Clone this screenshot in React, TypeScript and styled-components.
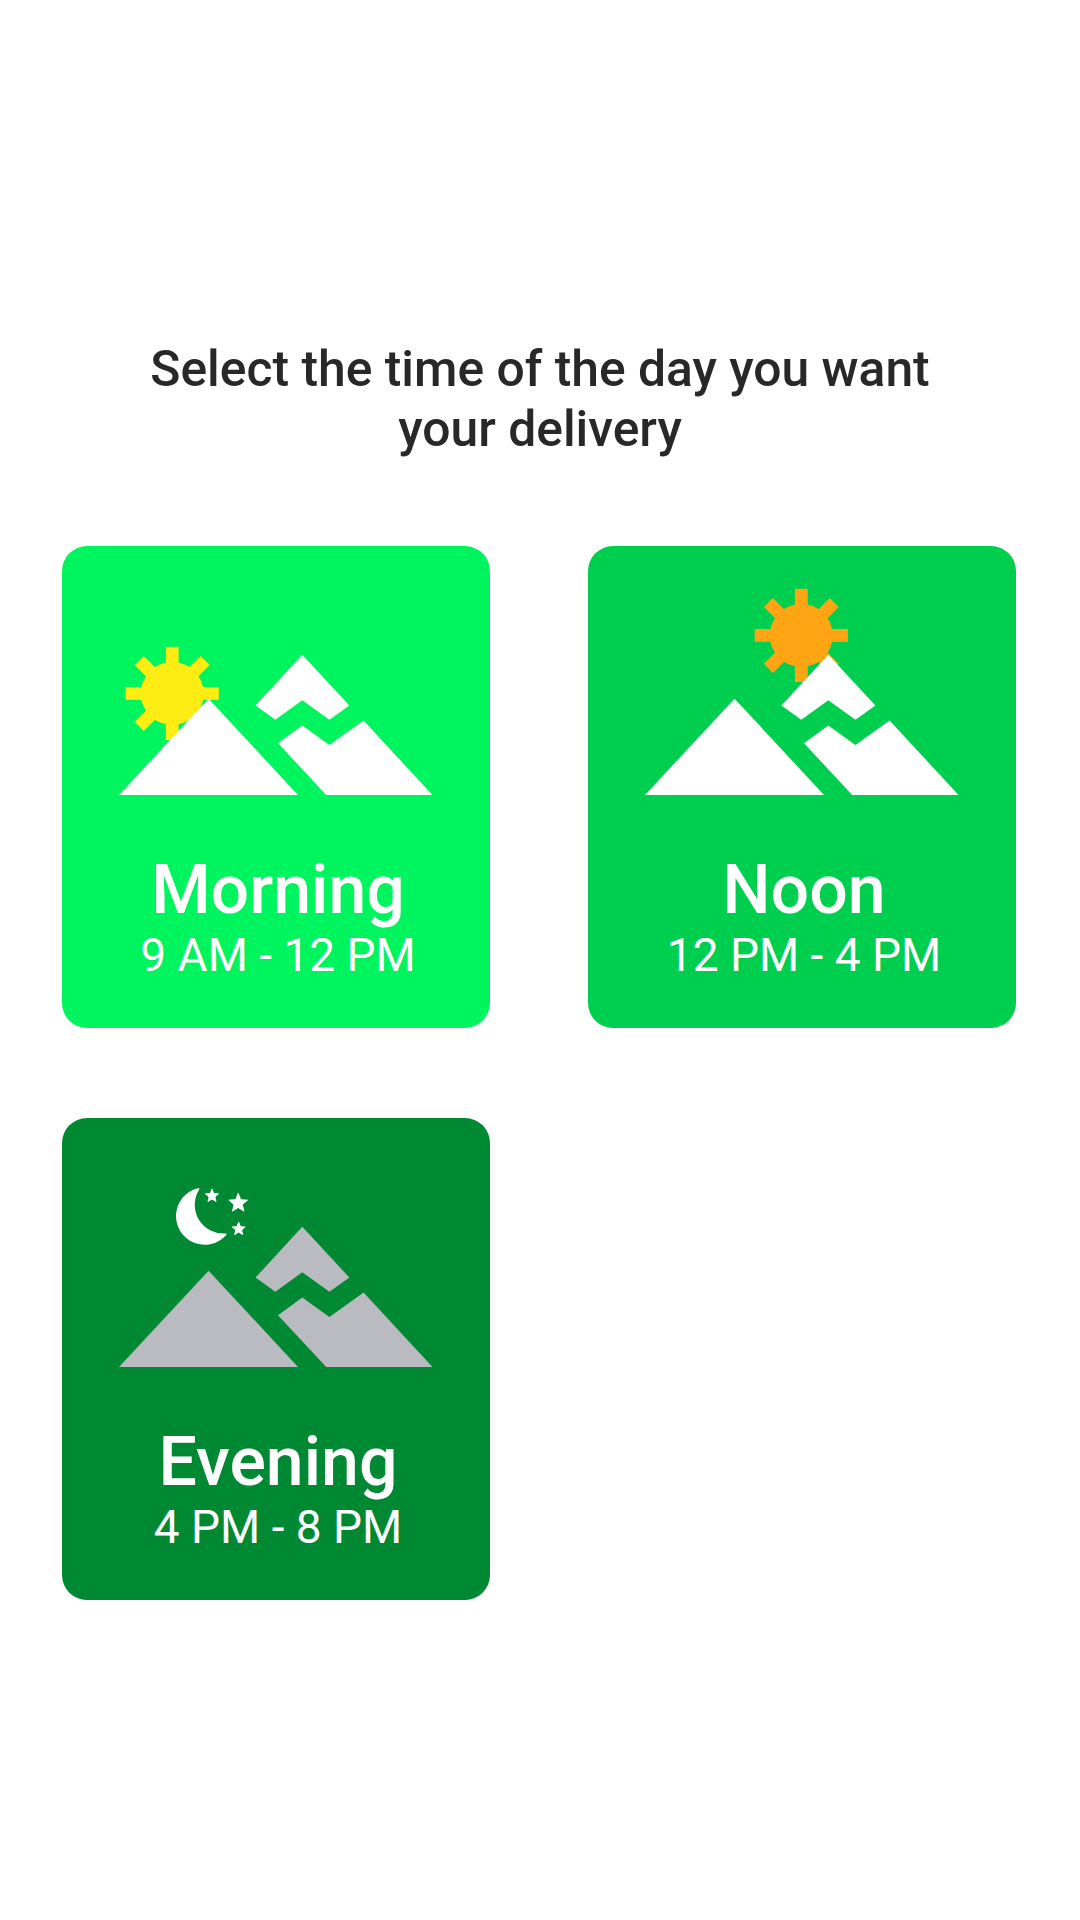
import React from "react";
import styled, { createGlobalStyle } from "styled-components";

const GlobalStyle = createGlobalStyle`
  * { box-sizing: border-box; }
  body {
    margin: 0;
    background: #ffffff;
    font-family: Roboto, "Liberation Sans", sans-serif;
  }
`;

const Page = styled.main`
  display: flex;
  flex-direction: column;
  align-items: center;
  min-height: 1920px;
  padding: 339px 62px 0;
`;

const Heading = styled.h1`
  width: 860px;
  margin: 0 0 87px;
  color: #282828;
  font-size: 49.8px;
  font-weight: 500;
  line-height: 60px;
  text-align: center;
`;

const SlotGrid = styled.div`
  display: grid;
  grid-template-columns: repeat(2, 428px);
  column-gap: 98px;
  row-gap: 90px;
  width: 100%;
`;

const SlotCard = styled.button<{ $color: string }>`
  display: flex;
  flex-direction: column;
  align-items: center;
  height: 482px;
  padding: 0;
  border: 0;
  border-radius: 25px;
  background: ${(p) => p.$color};
  color: #ffffff;
  font-family: inherit;
  text-align: center;
`;

const Scene = styled.svg`
  display: block;
  flex: none;
  width: 428px;
  height: 260px;
`;

const SlotName = styled.span`
  margin: 44px 0 0 4px;
  font-size: 68px;
  font-weight: 500;
  line-height: 80px;
`;

const SlotHours = styled.span`
  margin-left: 4px;
  font-size: 46px;
  font-weight: 400;
  line-height: 50px;
`;

function Mountains({ color }: { color: string }) {
  return (
    <g fill={color}>
      <path d="M146.6 152.7L236 249H57Z" />
      <path d="M240.3 108.7L287.4 159.6L267.4 173.8L240.3 154.3L213.3 173.8L193.5 159.6Z" />
      <path d="M240.3 179.6L267.4 198.9L301.6 174.5L370.5 249H264.2L216 197.2Z" />
    </g>
  );
}

function Sun({ x, y, color }: { x: number; y: number; color: string }) {
  return (
    <g transform={`translate(${x} ${y})`} fill={color}>
      <circle r="31.5" />
      {[0, 45, 90, 135].map((angle) => (
        <rect key={angle} x="-6.4" y="-46.6" width="12.8" height="93.2" transform={`rotate(${angle})`} />
      ))}
    </g>
  );
}

function Star({ x, y, r }: { x: number; y: number; r: number }) {
  const points = Array.from({ length: 10 }, (_, i) => {
    const radius = i % 2 ? r * 0.44 : r;
    const a = (i * Math.PI) / 5 - Math.PI / 2;
    return `${(x + radius * Math.cos(a)).toFixed(2)},${(y + radius * Math.sin(a)).toFixed(2)}`;
  }).join(" ");
  return <polygon points={points} fill="#ffffff" stroke="#ffffff" strokeWidth="1" strokeLinejoin="round" />;
}

function Moon() {
  return (
    <g>
      <path
        fill="#ffffff"
        d="M136 70.3Q138.2 69.7 137.2 71.5A28.7 28.7 0 0 0 163.4 115.5Q165.4 115.5 164.2 116.9A28.6 28.6 0 1 1 136 70.3Z"
      />
      <Star x={150} y={78} r={6.8} />
      <Star x={176.2} y={85.2} r={9.8} />
      <Star x={176.7} y={111.1} r={6.8} />
    </g>
  );
}

const slots = [
  { name: "Morning", hours: "9 AM - 12 PM", color: "#00f45d", peaks: "#ffffff", sky: <Sun x={110.2} y={147.4} color="#ffec13" /> },
  { name: "Noon", hours: "12 PM - 4 PM", color: "#00ce4e", peaks: "#ffffff", sky: <Sun x={213.3} y={89.4} color="#ffa412" /> },
  { name: "Evening", hours: "4 PM - 8 PM", color: "#008833", peaks: "#babbc0", sky: <Moon /> },
];

export default function App() {
  return (
    <>
      <GlobalStyle />
      <Page>
        <Heading>Select the time of the day you want your delivery</Heading>
        <SlotGrid>
          {slots.map((slot) => (
            <SlotCard key={slot.name} type="button" $color={slot.color}>
              <Scene viewBox="0 0 428 260" aria-hidden="true">
                {slot.sky}
                <Mountains color={slot.peaks} />
              </Scene>
              <SlotName>{slot.name}</SlotName>
              <SlotHours>{slot.hours}</SlotHours>
            </SlotCard>
          ))}
        </SlotGrid>
      </Page>
    </>
  );
}
